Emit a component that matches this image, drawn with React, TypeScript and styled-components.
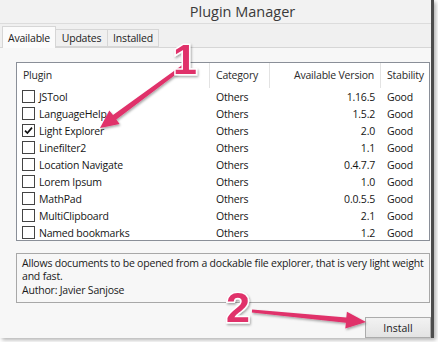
import styled, { createGlobalStyle } from "styled-components";

const GlobalStyle = createGlobalStyle`
  body {
    margin: 0;
    background: #ffffff;
    font-family: "Open Sans", "Noto Sans", sans-serif;
  }
`;

type Plugin = {
  name: string;
  category: string;
  version: string;
  stability: string;
  checked?: boolean;
};

const plugins: Plugin[] = [
  { name: "JSTool", category: "Others", version: "1.16.5", stability: "Good" },
  { name: "LanguageHelp", category: "Others", version: "1.5.2", stability: "Good" },
  { name: "Light Explorer", category: "Others", version: "2.0", stability: "Good", checked: true },
  { name: "Linefilter2", category: "Others", version: "1.1", stability: "Good" },
  { name: "Location Navigate", category: "Others", version: "0.4.7.7", stability: "Good" },
  { name: "Lorem Ipsum", category: "Others", version: "1.0", stability: "Good" },
  { name: "MathPad", category: "Others", version: "0.0.5.5", stability: "Good" },
  { name: "MultiClipboard", category: "Others", version: "2.1", stability: "Good" },
  { name: "Named bookmarks", category: "Others", version: "1.2", stability: "Good" },
];

const tabs = [
  { label: "Available", width: 54 },
  { label: "Updates", width: 52 },
  { label: "Installed", width: 51 },
];

export default function App() {
  return (
    <>
      <GlobalStyle />
      <Stage>
        <Window>
          <TitleBar>Plugin Manager</TitleBar>
          <TabStrip>
            {tabs.map((t, i) => (
              <Tab key={t.label} $active={i === 0} $width={t.width}>
                {t.label}
              </Tab>
            ))}
          </TabStrip>
          <Panel>
            <ListView>
              <HeaderRow>
                <HeadCell>Plugin</HeadCell>
                <HeadCell>Category</HeadCell>
                <HeadCell $align="right">Available Version</HeadCell>
                <HeadCell $last>Stability</HeadCell>
              </HeaderRow>
              {plugins.map((p) => (
                <Row key={p.name}>
                  <NameCell>
                    <CheckBox>
                      {p.checked && (
                        <svg width="9" height="9" viewBox="0 0 9 9">
                          <path d="M1 4.6 L3.4 7 L8 1.6" fill="none" stroke="#111" strokeWidth="1.7" />
                        </svg>
                      )}
                    </CheckBox>
                    {p.name}
                  </NameCell>
                  <Cell>{p.category}</Cell>
                  <Cell $align="right">{p.version}</Cell>
                  <Cell>{p.stability}</Cell>
                </Row>
              ))}
            </ListView>
            <Description>
              Allows documents to be opened from a dockable file explorer, that is very light weight
              <br />
              and fast.
              <br />
              Author: Javier Sanjose
            </Description>
            <ButtonRow>
              <Button>Install</Button>
            </ButtonRow>
          </Panel>
        </Window>
        <Overlay width="438" height="342" viewBox="0 0 438 342">
          <defs>
            <filter id="shadow" x="-20%" y="-20%" width="140%" height="140%">
              <feDropShadow dx="1" dy="1.5" stdDeviation="1.2" floodColor="#000" floodOpacity="0.35" />
            </filter>
          </defs>
          <g filter="url(#shadow)" fill="#e0306b">
            <polygon points="183,64.5 113,115 109.3,110.4 100,128 119.6,124 116.3,119.6 185,67.5" />
            <polygon points="252.1,309.6 346.3,317.4 346.9,311.8 366,322 345.3,328.4 345.9,322.8 251.9,312.4" />
          </g>
          <Digit x="185" y="74" filter="url(#shadow)">1</Digit>
          <Digit x="238" y="322" filter="url(#shadow)">2</Digit>
        </Overlay>
      </Stage>
    </>
  );
}

const Stage = styled.div`
  position: relative;
  width: 438px;
  height: 342px;
  overflow: hidden;
  background: #ffffff;
`;

const Window = styled.div`
  width: 431px;
  height: 336px;
  display: flex;
  flex-direction: column;
  background: #f0f0f0;
  border-right: 3px solid #4d4d4d;
  border-bottom: 2px solid #4d4d4d;
  box-shadow: 2px 2px 4px rgba(0, 0, 0, 0.3);
`;

const TitleBar = styled.div`
  height: 24px;
  flex: none;
  display: flex;
  align-items: center;
  justify-content: center;
  padding-left: 54px;
  box-sizing: border-box;
  border-bottom: 1px solid #dcdcdc;
  background: #f2f2f2;
  color: #3a3a3a;
  font-size: 14.5px;
`;

const TabStrip = styled.div`
  height: 23px;
  flex: none;
  display: flex;
  align-items: flex-end;
  padding-left: 2px;
`;

const Tab = styled.div<{ $active?: boolean; $width: number }>`
  box-sizing: border-box;
  width: ${(p) => p.$width}px;
  height: ${(p) => (p.$active ? 22 : 18)}px;
  margin-bottom: ${(p) => (p.$active ? -1 : 0)}px;
  display: flex;
  align-items: center;
  justify-content: center;
  position: relative;
  z-index: ${(p) => (p.$active ? 1 : 0)};
  border: 1px solid #d6d6d6;
  border-bottom: ${(p) => (p.$active ? "none" : "1px solid #d6d6d6")};
  border-left: ${(p) => (p.$active ? "1px solid #d6d6d6" : "none")};
  background: ${(p) => (p.$active ? "#fbfbfb" : "#f0f0f0")};
  color: #222;
  font-size: 10.5px;
  letter-spacing: -0.2px;
`;

const Panel = styled.div`
  flex: 1;
  display: flex;
  flex-direction: column;
  padding: 14px 0 0 16px;
  border-top: 1px solid #d6d6d6;
  background: #f7f7f7;
`;

const columns = "193px 60px 111px 1fr";

const ListView = styled.div`
  box-sizing: border-box;
  width: 414px;
  height: 179px;
  border: 1px solid #8a8f98;
  background: #ffffff;
  font-size: 10.5px;
  letter-spacing: -0.2px;
  color: #151515;
`;

const HeaderRow = styled.div`
  display: grid;
  grid-template-columns: ${columns};
  height: 25px;
`;

const HeadCell = styled.div<{ $align?: "right"; $last?: boolean }>`
  display: flex;
  align-items: center;
  justify-content: ${(p) => (p.$align === "right" ? "flex-end" : "flex-start")};
  padding: 0 6px 1px 6px;
  border-right: ${(p) => (p.$last ? "none" : "1px solid #e3e3e3")};
  color: #2a2a2a;
  white-space: nowrap;
`;

const Row = styled.div`
  display: grid;
  grid-template-columns: ${columns};
  height: 17px;
`;

const Cell = styled.div<{ $align?: "right" }>`
  display: flex;
  align-items: center;
  justify-content: ${(p) => (p.$align === "right" ? "flex-end" : "flex-start")};
  padding: 0 6px;
  white-space: nowrap;
`;

const NameCell = styled(Cell)`
  padding-left: 5px;
  gap: 4px;
`;

const CheckBox = styled.span`
  box-sizing: border-box;
  width: 13px;
  height: 13px;
  border: 1px solid #444444;
  background: #ffffff;
  display: flex;
  align-items: center;
  justify-content: center;
`;

const Description = styled.div`
  box-sizing: border-box;
  width: 414px;
  height: 50px;
  margin-top: 12px;
  padding: 3px 5px;
  border: 1px solid #a8a8a8;
  font-size: 10.5px;
  letter-spacing: -0.2px;
  line-height: 13.4px;
  color: #1a1a1a;
  white-space: nowrap;
`;

const ButtonRow = styled.div`
  display: flex;
  justify-content: flex-end;
  margin-top: 14px;
`;

const Button = styled.button`
  width: 66px;
  height: 21px;
  padding: 0;
  border: 1px solid #acacac;
  background: linear-gradient(#f2f2f2, #e3e3e3);
  font-family: inherit;
  font-size: 10.5px;
  color: #1a1a1a;
`;

const Overlay = styled.svg`
  position: absolute;
  top: 0;
  left: 0;
  pointer-events: none;
`;

const Digit = styled.text`
  font-family: "Liberation Sans", Arial, sans-serif;
  font-weight: bold;
  font-size: 43px;
  text-anchor: middle;
  fill: #e0306b;
  stroke: #ffffff;
  stroke-width: 3px;
  paint-order: stroke;
`;
